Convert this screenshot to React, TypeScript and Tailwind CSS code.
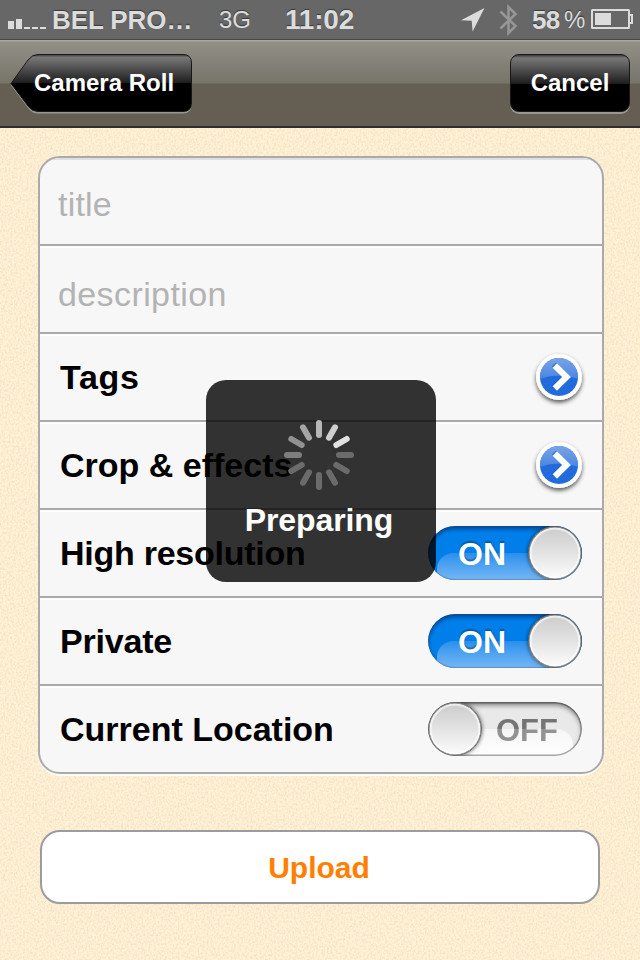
import type { ReactNode } from "react";

function PaperGrain() {
  return (
    <svg className="pointer-events-none absolute inset-0 h-full w-full" aria-hidden="true">
      <filter id="grain" x="0" y="0" width="100%" height="100%" colorInterpolationFilters="sRGB">
        <feTurbulence type="fractalNoise" baseFrequency="0.55 0.45" numOctaves="3" seed="4" />
        <feColorMatrix values="0 0 0 0 0.78  0 0 0 0 0.62  0 0 0 0 0.35  0.45 0 0 0 -0.17" />
      </filter>
      <rect width="100%" height="100%" filter="url(#grain)" />
    </svg>
  );
}

function StatusBar() {
  return (
    <header className="flex h-10 items-center border-b border-[#484846] bg-[#676767] text-[#dcdcdc] [text-shadow:0_-1px_1px_rgba(0,0,0,0.45)]">
      <svg width="40" height="10" viewBox="0 0 40 10" className="ml-2 mt-[9px] shrink-0" fill="#dcdcdc">
        <rect y="2" width="6" height="8" />
        <rect x="8" width="6" height="10" />
        <rect x="16" y="8" width="6" height="2" />
        <rect x="24" y="8" width="6" height="2" />
        <rect x="32" y="8" width="6" height="2" />
      </svg>
      <span className="ml-1 w-[167px] shrink-0 whitespace-nowrap text-[26px] font-bold leading-none tracking-[-0.1px]">BEL PRO…</span>
      <span className="w-[66px] shrink-0 text-[24px] leading-none">3G</span>
      <span className="w-[176px] shrink-0 text-[28px] font-bold leading-none tracking-[-0.2px]">11:02</span>
      <svg width="24" height="24" viewBox="0 0 24 24" className="shrink-0" fill="#dcdcdc">
        <path d="M23.500 0 0 12.200l10.700.5.9 10.700Z" />
      </svg>
      <svg width="20" height="32" viewBox="0 0 20 32" className="ml-[14px] shrink-0" fill="none" stroke="#979797" strokeWidth="2.5">
        <path d="m1.500 7.500 15 14.500-7 7V3l7 7L1.500 24.500" />
      </svg>
      <span className="ml-[13px] w-8 shrink-0 text-[26px] font-bold leading-none tracking-[-0.8px]">58</span>
      <span className="w-[27px] shrink-0 text-[24px] leading-none">%</span>
      <svg width="43" height="20" viewBox="0 0 43 20" className="mt-[-1px] shrink-0" fill="none" stroke="#dcdcdc" strokeWidth="2">
        <rect x="1" y="1" width="37" height="18" rx="0.5" />
        <path d="M38 6h3v8h-3" />
        <rect x="4" y="4" width="16" height="12" fill="#dcdcdc" stroke="none" />
      </svg>
    </header>
  );
}

function NavBar() {
  return (
    <nav className="flex h-[88px] items-start justify-between border-b-2 border-[#302f2c] bg-[linear-gradient(#aaa79e_0,#aaa79e_1px,#928f87_2px,#77746a_43px,#67624f_44px,#655f53_44px,#655f53_100%)] pl-[10px] pr-[10px] pt-[14px] text-[24px] font-bold text-white [text-shadow:0_-2px_1px_rgba(0,0,0,0.6)]">
      <button className="relative flex h-[58px] w-[182px] items-center pl-6">
        <svg width="182" height="60" viewBox="0 0 182 60" className="absolute left-0 top-0">
          <defs>
            <linearGradient id="gloss" x1="0" y1="0" x2="0" y2="1">
              <stop offset="0" stopColor="#3a3a3a" />
              <stop offset="0.05" stopColor="#777" />
              <stop offset="0.5" stopColor="#1d1d1d" />
              <stop offset="0.51" stopColor="#000" />
              <stop offset="1" stopColor="#000" />
            </linearGradient>
          </defs>
          <path d="M1 29.500 18 6Q22 .5 28 .5H173q8.500 0 8.500 8.500V49q0 8.500-8.500 8.500H28q-6 0-10-5.500Z" transform="translate(0 2)" fill="#99968b" />
          <path d="M1 29.500 18 6Q22 .5 28 .5H173q8.500 0 8.500 8.500V49q0 8.500-8.500 8.500H28q-6 0-10-5.500Z" fill="url(#gloss)" stroke="#191919" />
        </svg>
        <span className="relative whitespace-nowrap">Camera Roll</span>
      </button>
      <button className="h-[58px] w-[120px] rounded-[9px] border border-[#191919] bg-[linear-gradient(#3a3a3a,#777_3px,#1d1d1d_29px,#000_29px)] shadow-[0_2px_0_#99968b]">
        Cancel
      </button>
    </nav>
  );
}

function Row({ label, tracking = "", children }: { label: string; tracking?: string; children: ReactNode }) {
  return (
    <div className="flex h-[88px] items-center justify-between border-b-2 border-[#aaaaac] pl-5 pr-5 shadow-[inset_0_2px_0_#fff] last:border-b-0 last:h-[86px]">
      <span className={`text-[34px] font-bold leading-none text-black ${tracking}`}>{label}</span>
      {children}
    </div>
  );
}

function Disclosure() {
  return (
    <svg width="54" height="58" viewBox="0 0 54 58" className="-mr-1 mt-[2px]">
      <defs>
        <linearGradient id="disc" x1="0" y1="0" x2="0" y2="1">
          <stop offset="0" stopColor="#8db1ea" />
          <stop offset="1" stopColor="#4481e0" />
        </linearGradient>
        <clipPath id="discClip"><circle cx="27" cy="28" r="19" /></clipPath>
        <filter id="discShadow" x="-30%" y="-30%" width="160%" height="160%">
          <feDropShadow dx="0" dy="2.5" stdDeviation="2" floodOpacity="0.65" />
        </filter>
      </defs>
      <circle cx="27" cy="28" r="23" fill="#fff" filter="url(#discShadow)" />
      <circle cx="27" cy="28" r="19" fill="#216bdc" />
      <path clipPath="url(#discClip)" d="M0 0h54v33Q27 20 0 33Z" fill="url(#disc)" />
      <path d="m22 15.500 11.500 12L22 39" fill="none" stroke="#174fae" strokeOpacity="0.6" strokeWidth="6" />
      <path d="m22.800 16.500 11.700 11.500-11.700 11.500" fill="none" stroke="#fff" strokeWidth="6.200" />
    </svg>
  );
}

function Knob() {
  return (
    <span className="relative h-[54px] w-[54px] shrink-0 rounded-full border border-[#666] bg-linear-to-b from-[#cbcbcb] to-[#fcfcfc] shadow-[inset_0_0_0_0.5px_#777,inset_0_0_1px_2.5px_rgba(255,255,255,0.7),0_0_4px_rgba(0,0,0,0.6)]" />
  );
}

function Toggle({ on }: { on: boolean }) {
  return on ? (
    <div className="relative flex h-[54px] w-[154px] items-center justify-end overflow-hidden rounded-full bg-[#007fea]">
      <span className="absolute bottom-0 left-[9px] h-[27px] w-[150px] rounded-tl-[16px] bg-linear-to-b from-[#278fed] to-[#73b7f5]" />
      <span className="pointer-events-none absolute inset-0 rounded-full shadow-[inset_0_3px_4px_rgba(0,40,100,0.65),inset_0_0_0_1px_rgba(80,100,120,0.4)]" />
      <span className="relative mr-[22px] mt-[2px] text-[32px] font-bold leading-none text-white [text-shadow:0_-2px_1px_rgba(0,60,110,0.5)]">ON</span>
      <Knob />
    </div>
  ) : (
    <div className="relative flex h-[54px] w-[154px] items-center overflow-hidden rounded-full bg-[#e9e9e9]">
      <span className="absolute bottom-0 left-0 h-[27px] w-[145px] rounded-tr-[16px] bg-linear-to-b from-[#f5f5f5] to-white" />
      <span className="pointer-events-none absolute inset-0 rounded-full shadow-[inset_0_3px_5px_rgba(0,0,0,0.5),inset_0_0_0_1.5px_rgba(130,130,130,0.65)]" />
      <Knob />
      <span className="relative ml-[14px] mt-[3px] bg-[linear-gradient(#747474_44%,#929292_44%)] bg-clip-text text-[31px] font-bold leading-[34px] text-transparent">OFF</span>
    </div>
  );
}

const spokes = ["#b8b8b8", "#cecece", "#e2e2e2", "#6b6b6b", "#6b6b6b", "#6b6b6b", "#6b6b6b", "#6b6b6b", "#6b6b6b", "#7e7e7e", "#919191", "#a5a5a5"];

function PreparingOverlay() {
  return (
    <div className="absolute left-[206px] top-[380px] flex h-[202px] w-[230px] flex-col items-center rounded-[20px] bg-black/80 pt-10">
      <svg width="70" height="70" viewBox="-35 -35 70 70" className="-ml-1">
        {spokes.map((color, i) => (
          <rect key={i} x="-3" y="-35" width="6" height="18" rx="3" fill={color} transform={`rotate(${i * 30})`} />
        ))}
      </svg>
      <span className="-ml-1 mt-[14px] text-[32px] font-bold leading-[32px] tracking-[-0.1px] text-white">Preparing</span>
    </div>
  );
}

export default function App() {
  return (
    <div className="relative flex h-[960px] w-[640px] flex-col overflow-hidden bg-[#fff2d8] font-['Liberation_Sans',Arial,sans-serif]">
      <StatusBar />
      <NavBar />
      <main className="relative flex-1 px-[38px] pt-7">
        <PaperGrain />
        <section className="relative h-[618px] w-[566px] overflow-hidden rounded-[22px] border-2 border-[#aaaaac] bg-[#f7f7f7] shadow-[0_2px_0_rgba(255,255,255,0.85)]">
          <div className="flex h-[88px] items-center border-b-2 border-[#aaaaac] pl-[18px] pt-[6px] text-[34px] leading-none tracking-[0.2px] text-[#b3b3b3] shadow-[inset_0_2px_0_#dfdfdf]">title</div>
          <div className="flex h-[88px] items-center border-b-2 border-[#aaaaac] pl-[18px] pt-[10px] text-[34px] leading-none tracking-[0.4px] text-[#b3b3b3] shadow-[inset_0_2px_0_#fff]">description</div>
          <Row label="Tags" tracking="tracking-[0.7px]"><Disclosure /></Row>
          <Row label="Crop &amp; effects"><Disclosure /></Row>
          <Row label="High resolution" tracking="tracking-[-0.25px]"><Toggle on /></Row>
          <Row label="Private" tracking="tracking-[-0.2px]"><Toggle on /></Row>
          <Row label="Current Location"><Toggle on={false} /></Row>
        </section>
        <button className="relative ml-[2px] mt-14 block h-[74px] w-[560px] rounded-[20px] border-2 border-[#9c9c9e] bg-white pr-[2px] text-[30px] font-bold text-[#ff8000]">
          Upload
        </button>
      </main>
      <PreparingOverlay />
    </div>
  );
}
